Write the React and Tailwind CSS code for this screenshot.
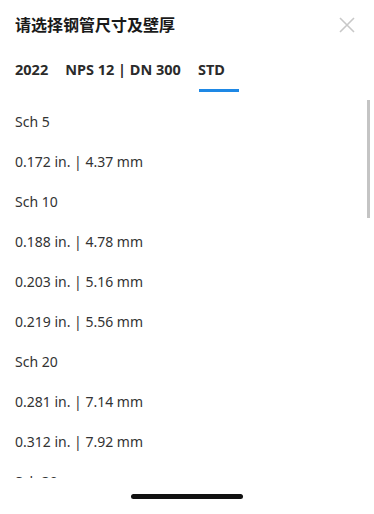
import React from 'react';

const rows = [
    'Sch 5',
    '0.172 in. | 4.37 mm',
    'Sch 10',
    '0.188 in. | 4.78 mm',
    '0.203 in. | 5.16 mm',
    '0.219 in. | 5.56 mm',
    'Sch 20',
    '0.281 in. | 7.14 mm',
    '0.312 in. | 7.92 mm',
    'Sch 30',
];

const tabs = ['2022', 'NPS 12 | DN 300', 'STD'];

export default function App() {
    return (
        <div
            className="w-[374px] h-[514px] bg-white flex flex-col overflow-hidden"
            style={{ fontFamily: '"Noto Sans", "Noto Sans CJK SC", sans-serif' }}
        >
            <div className="h-[50px] flex items-center justify-between pl-[15px] pr-[19px]">
                <h2 className="text-[16px] font-bold text-[#1a1a1a]">请选择钢管尺寸及壁厚</h2>
                <svg width="16" height="16" viewBox="0 0 16 16" className="text-[#c8c8c8]">
                    <path d="M1 1 L15 15 M15 1 L1 15" stroke="currentColor" strokeWidth="1.6" fill="none" />
                </svg>
            </div>

            <div className="flex gap-[17px] px-[15px]">
                {tabs.map((t, i) => (
                    <div key={t} className="flex flex-col">
                        <div className="h-[39px] flex items-center text-[14.5px] font-bold text-[#2b2b2b]">{t}</div>
                        <div className={i === tabs.length - 1 ? 'h-[3px] w-[40px] bg-[#1e88e5] ml-px' : 'h-[3px]'} />
                    </div>
                ))}
            </div>

            <div className="relative h-[386px] overflow-hidden pt-[9px]">
                {rows.map((r) => (
                    <div key={r} className="h-[40px] flex items-center px-[15px] text-[14px] text-[#333]">
                        {r}
                    </div>
                ))}
                <div className="absolute top-[8px] right-[4px] w-[3px] h-[118px] bg-[#c4c4c4]" />
            </div>

            <div className="flex-1 flex items-center justify-center">
                <div className="w-[112px] h-[5px] rounded-full bg-[#111]" />
            </div>
        </div>
    );
}
